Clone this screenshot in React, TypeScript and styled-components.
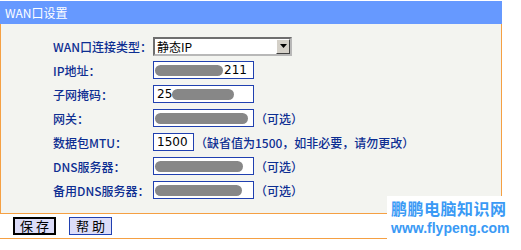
import React from 'react';
import styled, { createGlobalStyle } from 'styled-components';

const GlobalStyle = createGlobalStyle`
  html, body {
    margin: 0;
    padding: 0;
    background: #ffffff;
  }
  body {
    font-family: 'Noto Sans CJK SC', 'DejaVu Sans', sans-serif;
    font-size: 12px;
  }
`;

const ORANGE = '#f5a043';
const NAVY = '#0d2e92';
const FIELD_BORDER = '#2040b0';

interface Field {
  label: string;
  width: number;
  prefix?: string;
  blot?: { left: number; width: number };
  suffix?: string;
  hint?: string;
}

const fields: Field[] = [
  { label: 'IP地址：', width: 100, blot: { left: 1, width: 68 }, suffix: '211' },
  { label: '子网掩码：', width: 100, prefix: '25', blot: { left: 18, width: 62 } },
  { label: '网关：', width: 100, blot: { left: 1, width: 93 }, hint: '（可选）' },
  { label: '数据包MTU：', width: 40, prefix: '1500', hint: '（缺省值为1500，如非必要，请勿更改）' },
  { label: 'DNS服务器：', width: 100, blot: { left: 1, width: 88 }, hint: '（可选）' },
  { label: '备用DNS服务器：', width: 100, blot: { left: 1, width: 87 }, hint: '（可选）' },
];

const App = () => {
  return (
    <Page>
      <GlobalStyle />
      <Header>WAN口设置</Header>
      <Panel>
        <Label>WAN口连接类型：</Label>
        <Cell>
          <Select>
            <SelectValue>静态IP</SelectValue>
            <DropButton>
              <svg width="7" height="4" viewBox="0 0 7 4">
                <polygon points="0,0 7,0 3.5,4" fill="#000" />
              </svg>
            </DropButton>
          </Select>
        </Cell>
        {fields.map((f) => (
          <React.Fragment key={f.label}>
            <Label>{f.label}</Label>
            <Cell>
              <Input $width={f.width}>
                {f.prefix && <span>{f.prefix}</span>}
                {f.suffix && <Suffix>{f.suffix}</Suffix>}
                {f.blot && <Blot style={{ left: f.blot.left, width: f.blot.width }} />}
              </Input>
              {f.hint && <Hint>{f.hint}</Hint>}
            </Cell>
          </React.Fragment>
        ))}
      </Panel>
      <ButtonBar>
        <Button $primary>保 存</Button>
        <Button>帮 助</Button>
      </ButtonBar>
      <Watermark>
        <WmTitle>鹏鹏电脑知识网</WmTitle>
        <WmUrl>www.flypeng.com</WmUrl>
      </Watermark>
    </Page>
  );
};

export default App;

const Page = styled.div`
  position: relative;
  width: 502px;
  padding-top: 1px;
`;

const Header = styled.div`
  height: 23px;
  background: #6699ff;
  color: #ffffff;
  font-size: 12px;
  line-height: 23px;
  padding-left: 5px;
`;

const Panel = styled.div`
  display: grid;
  grid-template-columns: 100px 1fr;
  grid-auto-rows: 24px;
  align-items: center;
  padding: 10px 0 11px 52px;
  background: #f3f4f0;
  border-left: 1px solid ${ORANGE};
  border-right: 1px solid ${ORANGE};
  border-bottom: 1px solid ${ORANGE};
`;

const Label = styled.div`
  color: ${NAVY};
  font-size: 12px;
  font-weight: 500;
  white-space: nowrap;
`;

const Cell = styled.div`
  display: flex;
  align-items: center;
`;

const Select = styled.div`
  display: flex;
  align-items: center;
  box-sizing: border-box;
  width: 139px;
  height: 19px;
  background: #ffffff;
  border: 2px solid;
  border-color: #6e6e6e #b8b8b8 #b8b8b8 #6e6e6e;
`;

const SelectValue = styled.div`
  flex: 1;
  padding-left: 2px;
  font-size: 12px;
  color: #000;
`;

const DropButton = styled.div`
  display: flex;
  align-items: center;
  justify-content: center;
  width: 14px;
  height: 15px;
  box-sizing: border-box;
  background: #d4d0c8;
  border: 1px solid;
  border-color: #ffffff #404040 #404040 #ffffff;
`;

const Input = styled.div<{ $width: number }>`
  position: relative;
  display: flex;
  align-items: center;
  box-sizing: border-box;
  width: ${(p) => p.$width + 1}px;
  height: 18px;
  padding-left: 3px;
  background: #ffffff;
  border: 1px solid ${FIELD_BORDER};
  font-family: 'DejaVu Sans', sans-serif;
  font-size: 12px;
  color: #000;
  overflow: hidden;
`;

const Suffix = styled.span`
  margin-left: auto;
  margin-right: 6px;
`;

const Blot = styled.span`
  position: absolute;
  top: 3px;
  height: 11px;
  border-radius: 6px;
  background: #878787;
`;

const Hint = styled.span`
  margin-left: 1px;
  color: ${NAVY};
  font-size: 12px;
  font-weight: 500;
  white-space: nowrap;
`;

const ButtonBar = styled.div`
  display: flex;
  gap: 13px;
  height: 25px;
  box-sizing: border-box;
  padding: 3px 0 0 13px;
  border-bottom: 1px solid ${ORANGE};
`;

const Button = styled.div<{ $primary?: boolean }>`
  display: flex;
  align-items: center;
  justify-content: center;
  box-sizing: border-box;
  width: 43px;
  height: 18px;
  background: #dcdcf8;
  border: ${(p) => (p.$primary ? '2px solid #000' : `1px solid ${FIELD_BORDER}`)};
  font-size: 13px;
  line-height: 14px;
  color: #000;
`;

const Watermark = styled.div`
  position: absolute;
  left: 387px;
  top: 196px;
  width: 134px;
  height: 46px;
  background: #ffffff;
  display: flex;
  flex-direction: column;
  padding: 1px 0 0 4px;
  box-sizing: border-box;
  color: #3a9af5;
`;

const WmTitle = styled.div`
  font-size: 16px;
  font-weight: bold;
  line-height: 23px;
  letter-spacing: 0.5px;
`;

const WmUrl = styled.div`
  font-family: 'Liberation Sans', sans-serif;
  font-size: 14px;
  font-weight: bold;
  line-height: 16px;
`;
